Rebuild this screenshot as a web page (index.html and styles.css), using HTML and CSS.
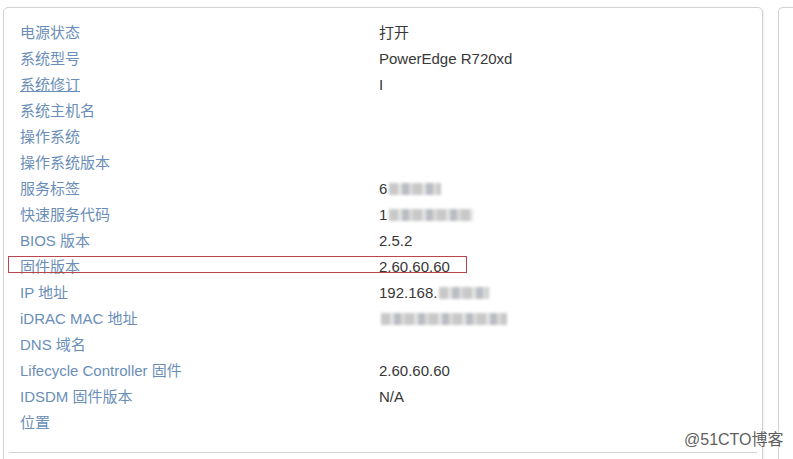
FILE: index.html
```html
<!DOCTYPE html>
<html lang="zh-CN">
<head>
    <meta charset="UTF-8">
    <meta name="viewport" content="width=device-width, initial-scale=1.0">
    <title>系统摘要 - iDRAC</title>
    <link rel="stylesheet" href="styles.css">
</head>
<body>
    <div class="page">
        <!-- 系统属性面板 -->
        <div class="panel">
            <div class="panel-body">
                <div class="row"><span class="label">电源状态</span><span class="value">打开</span></div>
                <div class="row"><span class="label">系统型号</span><span class="value">PowerEdge R720xd</span></div>
                <div class="row"><span class="label link">系统修订</span><span class="value">I</span></div>
                <div class="row"><span class="label">系统主机名</span><span class="value"></span></div>
                <div class="row"><span class="label">操作系统</span><span class="value"></span></div>
                <div class="row"><span class="label">操作系统版本</span><span class="value"></span></div>
                <div class="row"><span class="label">服务标签</span><span class="value">6<span class="blur" style="width: 52px"></span></span></div>
                <div class="row"><span class="label">快速服务代码</span><span class="value">1<span class="blur" style="width: 84px"></span></span></div>
                <div class="row"><span class="label">BIOS 版本</span><span class="value">2.5.2</span></div>
                <div class="row"><span class="label">固件版本</span><span class="value">2.60.60.60</span></div>
                <div class="row"><span class="label">IP 地址</span><span class="value">192.168.<span class="blur" style="width: 50px"></span></span></div>
                <div class="row"><span class="label">iDRAC MAC 地址</span><span class="value"><span class="blur" style="width: 126px"></span></span></div>
                <div class="row"><span class="label">DNS 域名</span><span class="value"></span></div>
                <div class="row"><span class="label">Lifecycle Controller 固件</span><span class="value">2.60.60.60</span></div>
                <div class="row"><span class="label">IDSDM 固件版本</span><span class="value">N/A</span></div>
                <div class="row"><span class="label">位置</span><span class="value"></span></div>
            </div>
            <div class="panel-footer"></div>
        </div>

        <!-- 右侧面板 -->
        <div class="panel side"></div>

        <!-- 标注框 -->
        <div class="highlight"></div>
        <div class="watermark">@51CTO博客</div>
    </div>
</body>
</html>
```

FILE: styles.css
```css
:root {
    --border: #d2d2d2;
    --label: #6a8eb8;
    --value: #383838;
    --mark-red: #b9464c;
}

* {
    margin: 0;
    padding: 0;
    box-sizing: border-box;
}

html, body {
    height: 459px;
    overflow: hidden;
}

body {
    font-family: 'Liberation Sans', Arial, 'Noto Sans CJK SC', sans-serif;
    font-size: 15px;
    background: #ffffff;
}

.page {
    position: relative;
    display: flex;
    align-items: flex-start;
    height: 100%;
}

.panel {
    margin: 7px 0 0 3px;
    width: 760px;
    border: 1px solid var(--border);
    border-radius: 5px;
    box-shadow: 1px 1px 2px rgba(0, 0, 0, 0.08);
    flex-shrink: 0;
}

.panel-body {
    padding: 12px 0 16px 16px;
}

.row {
    display: flex;
    height: 26px;
    line-height: 26px;
}

.label {
    width: 359px;
    color: var(--label);
    flex-shrink: 0;
}

.label.link {
    text-decoration: underline;
}

.value {
    color: var(--value);
    display: flex;
    align-items: center;
}

.blur {
    display: inline-block;
    height: 12px;
    margin-left: 2px;
    background: repeating-linear-gradient(90deg, #c8c8c8 0 9px, #e4e4e4 9px 13px, #b9bcc2 13px 20px, #dadada 20px 24px);
    filter: blur(1.4px);
}

.panel-footer {
    margin: 0 5px;
    height: 12px;
    border-top: 1px solid var(--border);
}

.panel.side {
    margin-left: 15px;
    flex: 1;
    width: auto;
    height: 470px;
    border-right: none;
    border-radius: 5px 0 0 5px;
}

.highlight {
    position: absolute;
    left: 8px;
    top: 256px;
    width: 459px;
    height: 17px;
    border: 1px solid var(--mark-red);
}

.watermark {
    position: absolute;
    left: 684px;
    top: 430px;
    font-size: 16px;
    line-height: 20px;
    color: #5e5e5e;
    text-shadow: 0 0 2px #ffffff, 0 0 2px #ffffff;
}
```
